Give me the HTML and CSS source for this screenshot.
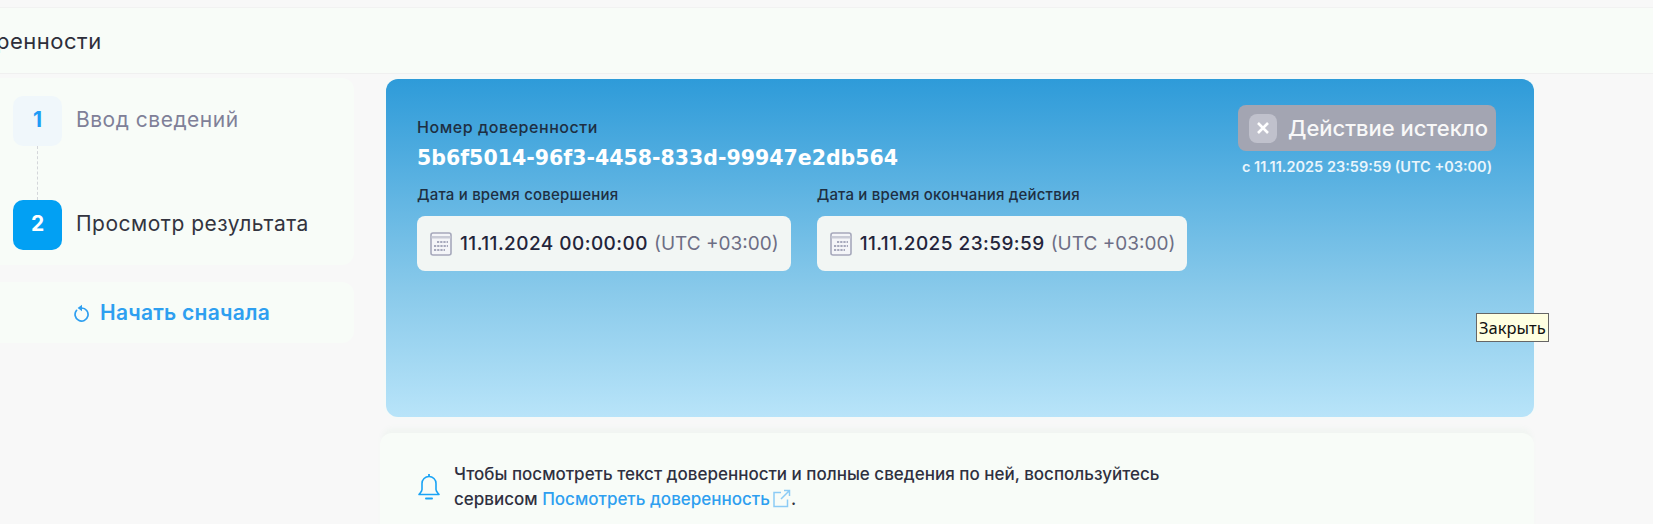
FILE: index.html
```html
<!DOCTYPE html>
<html lang="ru">
<head>
  <meta charset="utf-8">
  <title>Проверка доверенности</title>
  <link rel="stylesheet" href="styles.css">
</head>
<body>

<div class="page">
  <div class="page-header">
    <h1 class="page-title">Проверка доверенности</h1>
  </div>

  <div class="page-body">
    <div class="sidebar">
      <div class="panel steps">
        <div class="step">
          <div class="step-num">1</div>
          <div class="step-label">Ввод сведений</div>
        </div>
        <div class="step-line"></div>
        <div class="step step-active">
          <div class="step-num">2</div>
          <div class="step-label">Просмотр результата</div>
        </div>
      </div>
      <div class="panel restart">
        <svg class="restart-icon" width="17" height="18" viewBox="0 0 17 18" fill="none">
          <path d="M3.600 6.300a6.500 6.500 0 1 0 5-2.300" stroke="#2e9ff0" stroke-width="1.700" stroke-linecap="round"/>
          <path d="M9 .8v6.400L4.600 4z" fill="#2e9ff0"/>
        </svg>
        <span>Начать сначала</span>
      </div>
    </div>

    <div class="content">
      <div class="result-card">
        <div class="result-info">
          <div class="field-label field-label-wide">Номер доверенности</div>
          <div class="poa-id">5b6f5014-96f3-4458-833d-99947e2db564</div>
          <div class="dates">
            <div class="date-col">
              <div class="field-label">Дата и время совершения</div>
              <div class="date-box">
                <svg class="cal" width="22" height="24" viewBox="0 0 22 24" fill="none">
                  <rect x="1" y="1" width="20" height="22" rx="2" fill="#f4f5f8" stroke="#a6a8bb" stroke-width="1.600"/>
                  <rect x="1.500" y="4" width="19" height="2.500" fill="#c9cbd6"/>
                  <path d="M7 10h11M4 14h14M4 18h11" stroke="#a6a8bb" stroke-width="2.200" stroke-dasharray="2.200 1"/>
                </svg>
                <span class="date-val">11.11.2024 00:00:00</span>
                <span class="date-tz">(UTC +03:00)</span>
              </div>
            </div>
            <div class="date-col">
              <div class="field-label">Дата и время окончания действия</div>
              <div class="date-box">
                <svg class="cal" width="22" height="24" viewBox="0 0 22 24" fill="none">
                  <rect x="1" y="1" width="20" height="22" rx="2" fill="#f4f5f8" stroke="#a6a8bb" stroke-width="1.600"/>
                  <rect x="1.500" y="4" width="19" height="2.500" fill="#c9cbd6"/>
                  <path d="M7 10h11M4 14h14M4 18h11" stroke="#a6a8bb" stroke-width="2.200" stroke-dasharray="2.200 1"/>
                </svg>
                <span class="date-val">11.11.2025 23:59:59</span>
                <span class="date-tz">(UTC +03:00)</span>
              </div>
            </div>
          </div>
        </div>
        <div class="status">
          <div class="status-badge">
            <span class="status-x">
              <svg width="14" height="14" viewBox="0 0 14 14"><path d="M2 2l10 10M12 2L2 12" stroke="#fff" stroke-width="2.600"/></svg>
            </span>
            <span>Действие истекло</span>
          </div>
          <div class="status-since">с 11.11.2025 23:59:59 (UTC +03:00)</div>
        </div>
      </div>

      <div class="panel notice">
        <svg class="bell" width="24" height="28" viewBox="0 0 24 28" fill="none">
          <path d="M12 3.500a7 7 0 0 0-7 7v6c0 2-2 3.500-3 5h20c-1-1.500-3-3-3-5v-6a7 7 0 0 0-7-7z" stroke="#1aa3f5" stroke-width="1.600" stroke-linejoin="round"/>
          <path d="M12 1v2.500" stroke="#1aa3f5" stroke-width="1.800"/>
          <path d="M9 25.500h6" stroke="#1aa3f5" stroke-width="2" stroke-linecap="round"/>
        </svg>
        <p class="notice-text">
          Чтобы посмотреть текст доверенности и полные сведения по ней, воспользуйтесь<br>
          сервисом <a class="link" href="#">Посмотреть доверенность</a><svg class="ext" width="19" height="19" viewBox="0 0 19 19" fill="none">
            <path d="M9 3.500H2v14h13.500v-7M9 10l8.500-8.500M12 1.500h5.500V7" stroke="#8ccbf5" stroke-width="1.500"/>
          </svg>.
        </p>
      </div>
    </div>
  </div>

  <div class="tooltip">Закрыть</div>
</div>

</body>
</html>
```

FILE: styles.css
```css
* {
  margin: 0;
  padding: 0;
  box-sizing: border-box;
}

html, body {
  width: 100%;
  height: 100%;
  overflow: hidden;
  background: #f8f8f8;
}

body {
  font-family: Inter, "Noto Sans", sans-serif;
  color: #2a2b3a;
}

.page {
  position: relative;
  height: 524px;
  padding-top: 7px;
  overflow: hidden;
}

.page-header {
  height: 67px;
  background: #f8fcf8;
  border-top: 1px solid #f2f2f2;
  border-bottom: 1px solid #f0f0f0;
  display: flex;
  align-items: center;
}

.page-title {
  margin-left: -175px;
  font-size: 22px;
  font-weight: 400;
  letter-spacing: .5px;
  white-space: nowrap;
  color: #2d2e3a;
}

.page-body {
  display: flex;
  padding-top: 4px;
}

.sidebar {
  width: 354px;
  flex-shrink: 0;
  display: flex;
  flex-direction: column;
  gap: 17px;
}

.panel {
  background: #f8fcf8;
  border-radius: 12px;
}

.steps {
  height: 187px;
  padding: 18px 13px;
  border-radius: 0 12px 12px 0;
}

.step {
  display: flex;
  align-items: center;
  gap: 14px;
}

.step-num {
  width: 49px;
  height: 50px;
  padding-bottom: 3px;
  border-radius: 10px;
  background: #f0f7fb;
  color: #1f9cf5;
  font-size: 21px;
  font-weight: 700;
  display: flex;
  align-items: center;
  justify-content: center;
}

.step-label {
  padding-bottom: 3px;
  font-size: 21px;
  letter-spacing: .5px;
  color: #7f8098;
}

.step-active .step-num {
  background: #02a0f3;
  color: #fff;
}

.step-active .step-label {
  color: #33343f;
}

.step-line {
  height: 54px;
  margin-left: 24px;
  border-left: 1px dashed #d4d6da;
}

.restart {
  height: 61px;
  border-radius: 0 12px 12px 0;
  padding-left: 73px;
  display: flex;
  align-items: center;
  gap: 10px;
  font-size: 21px;
  font-weight: 600;
  letter-spacing: .25px;
  color: #2e9ff0;
}

.content {
  width: 1154px;
  margin-left: 26px;
  display: flex;
  flex-direction: column;
  gap: 16px;
}

.result-card {
  margin: 1px 0 0 6px;
  height: 338px;
  padding: 38px 31px;
  border-radius: 12px;
  background: linear-gradient(180deg, #2e9bd9 0%, #88c9ea 62%, #b8e4f9 100%);
  box-shadow: 0 0 0 3px #f6f9f8;
  display: flex;
  justify-content: space-between;
  align-items: flex-start;
  position: relative;
}

.field-label {
  font-size: 15px;
  font-weight: 500;
  line-height: 20px;
  letter-spacing: .2px;
  color: #1e2f42;
}

.field-label-wide {
  font-size: 16px;
  letter-spacing: .55px;
}

.poa-id {
  margin-top: 8px;
  font-family: "DejaVu Sans", sans-serif;
  font-size: 20.500px;
  font-weight: 700;
  color: #fff;
  line-height: 26px;
}

.dates {
  margin-top: 14px;
  display: flex;
  gap: 26px;
}

.date-col {
  display: flex;
  flex-direction: column;
  gap: 11px;
}

.date-box {
  height: 55px;
  padding: 0 12px 0 13px;
  border-radius: 8px;
  background: #f2f6f4;
  display: flex;
  align-items: center;
  gap: 6px;
  font-size: 19px;
  white-space: nowrap;
}

.cal {
  margin-right: 2px;
}

.date-val {
  font-weight: 500;
  letter-spacing: .45px;
  color: #23243a;
}

.date-tz {
  color: #6d6e85;
}

.status {
  position: absolute;
  top: 26px;
  right: 38px;
  width: 258px;
  display: flex;
  flex-direction: column;
  align-items: center;
}

.status-badge {
  width: 100%;
  height: 46px;
  padding-left: 11px;
  border-radius: 8px;
  background: #a3a5b2;
  color: #f8f8f8;
  font-size: 22px;
  font-weight: 500;
  display: flex;
  align-items: center;
  gap: 11px;
}

.status-x {
  width: 28px;
  height: 29px;
  border-radius: 8px;
  background: #c0c1cc;
  display: flex;
  align-items: center;
  justify-content: center;
}

.status-since {
  margin-top: 7px;
  font-size: 14.500px;
  font-weight: 600;
  color: #e9f5fc;
  white-space: nowrap;
}

.notice {
  height: 120px;
  padding: 29px 37px;
  display: flex;
  gap: 13px;
  align-items: flex-start;
  box-shadow: 0 -7px 5px -2px #f1f5f2;
}

.bell {
  margin-top: 11px;
  flex-shrink: 0;
}

.notice-text {
  font-size: 17px;
  line-height: 25px;
  font-weight: 500;
  color: #2f3040;
}

.link {
  color: #2e9ff0;
  text-decoration: none;
}

.ext {
  margin-left: 2px;
  vertical-align: -3px;
}

.tooltip {
  position: absolute;
  left: 1476px;
  top: 313px;
  height: 29px;
  padding: 0 2px;
  border: 1px solid #666;
  background: #ffffe1;
  color: #111;
  font-family: "Noto Sans", sans-serif;
  font-size: 16.500px;
  line-height: 27px;
}
```
